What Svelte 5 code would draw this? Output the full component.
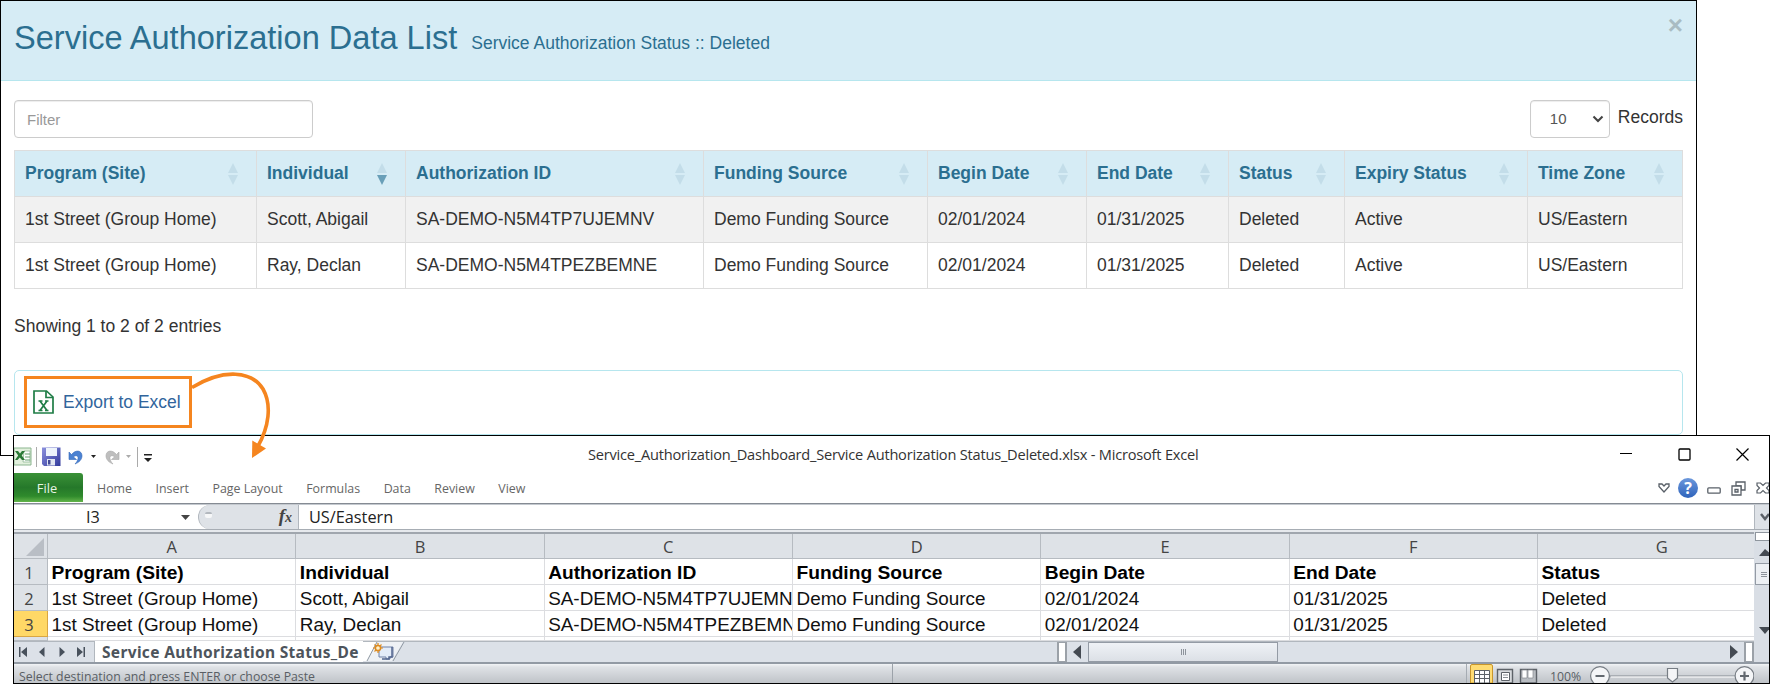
<script>
  const columns = [
    { name: "Program (Site)", width: 242 },
    { name: "Individual", width: 149, sorted: true },
    { name: "Authorization ID", width: 298 },
    { name: "Funding Source", width: 224 },
    { name: "Begin Date", width: 159 },
    { name: "End Date", width: 142 },
    { name: "Status", width: 116 },
    { name: "Expiry Status", width: 183 },
    { name: "Time Zone", width: 155 },
  ];

  const rows = [
    ["1st Street (Group Home)", "Scott, Abigail", "SA-DEMO-N5M4TP7UJEMNV", "Demo Funding Source", "02/01/2024", "01/31/2025", "Deleted", "Active", "US/Eastern"],
    ["1st Street (Group Home)", "Ray, Declan", "SA-DEMO-N5M4TPEZBEMNE", "Demo Funding Source", "02/01/2024", "01/31/2025", "Deleted", "Active", "US/Eastern"],
  ];

  const ribbonTabs = ["Home", "Insert", "Page Layout", "Formulas", "Data", "Review", "View"];
  const letters = ["A", "B", "C", "D", "E", "F", "G"];
  const sheetRows = [columns.map((c) => c.name), ...rows].map((r) => r.slice(0, 7));
  let activeRow = 3;
</script>

<div class="stage">
  <section class="panel">
    <header class="panel-header">
      <h1>Service Authorization Data List</h1>
      <span class="subtitle">Service Authorization Status :: Deleted</span>
      <button class="close" aria-label="Close">×</button>
    </header>

    <div class="panel-body">
      <div class="controls">
        <input class="filter" placeholder="Filter" />
        <div class="records">
          <div class="select">
            <span>10</span>
            <svg width="12" height="8" viewBox="0 0 12 8"><path d="M1.5 1.5 6 6l4.500-4.500" fill="none" stroke="#444" stroke-width="2.100" /></svg>
          </div>
          <span>Records</span>
        </div>
      </div>

      <table>
        <colgroup>
          {#each columns as col}
            <col style="width: {col.width}px" />
          {/each}
        </colgroup>
        <thead>
          <tr>
            {#each columns as col}
              <th>
                <div class="th">
                  <span>{col.name}</span>
                  <svg width="10" height="22" viewBox="0 0 10 22">
                    <path d="M5 0l5 10H0z" fill="#c3dde9" />
                    <path d="M0 12h10L5 22z" fill={col.sorted ? "#699fb8" : "#c3dde9"} />
                  </svg>
                </div>
              </th>
            {/each}
          </tr>
        </thead>
        <tbody>
          {#each rows as row}
            <tr>
              {#each row as cell}
                <td>{cell}</td>
              {/each}
            </tr>
          {/each}
        </tbody>
      </table>

      <p class="info">Showing 1 to 2 of 2 entries</p>

      <div class="export-bar">
        <div class="export">
          <svg width="21" height="24" viewBox="0 0 21 24">
            <g fill="none" stroke="#1f7d46" stroke-width="1.700">
              <path d="M1 1h12.500L20 7v16H1z" />
              <path d="M13 1v6.500h7" />
              <path d="M7 11l7 9.500M14 11l-7 9.500" />
              <path d="M5.500 11h4M12 11h3.500M5.500 20.500h4M12 20.500h3.500" stroke-width="1.300" />
            </g>
          </svg>
          <a href="#export">Export to Excel</a>
        </div>
      </div>
    </div>
  </section>

  <section class="excel">
    <div class="titlebar">
      <div class="quick">
        <svg width="18" height="20" viewBox="0 0 18 20">
          <path d="M0 1h17v17H0z" fill="#e2f0dd" stroke="#8bb58f" />
          <path d="M10 4h6v11h-7z" fill="#fff" stroke="#93b998" stroke-width=".8" />
          <path d="M11 7h5M11 10h5M11 13h5" stroke="#68a070" />
          <path d="M1 4h3l2 2.500L8 4h3L7.700 8.500 11 13H8L5.800 10.500 3.500 13H1l3.200-4.500z" fill="#2b7a37" />
        </svg>
        <i class="divider"></i>
        <svg class="save" width="19" height="19" viewBox="0 0 19 19">
          <defs>
            <linearGradient id="disk" x1="0" y1="0" x2="1" y2="1">
              <stop offset="0" stop-color="#8c91de" />
              <stop offset="1" stop-color="#323a9b" />
            </linearGradient>
          </defs>
          <path d="M0 .5h18.500V19H2L0 17z" fill="url(#disk)" />
          <path d="M4 1h11v8H4z" fill="#eef4fb" />
          <path d="M5 12h8v6.500H5z" fill="#e1e6f2" />
          <path d="M6 13h2.500v4.500H6z" fill="#434a94" />
        </svg>
        <svg class="undo" width="15" height="16" viewBox="0 0 15 16">
          <path d="M1 3v7.500h7.500L5.500 8c2-2.200 5-1.500 4.500 1.500-.2 2-1.400 3.800-3 5.500 4-1.500 7.200-4.500 7-8.500C13.700 1.500 8 .2 3.500 5.500z" fill="#4b82d2" stroke="#3569b8" stroke-width=".6" />
        </svg>
        <svg class="drop" width="5" height="3" viewBox="0 0 5 3"><path d="M0 0h5L2.500 3z" fill="#222" /></svg>
        <svg class="redo" width="15" height="16" viewBox="0 0 15 16">
          <path d="M14 3v7.500H6.500L9.500 8c-2-2.200-5-1.500-4.500 1.500.2 2 1.400 3.800 3 5.500-4-1.500-7.200-4.500-7-8.500C1.300 1.500 7 .2 11.500 5.500z" fill="#bebebe" stroke="#aaa" stroke-width=".6" />
        </svg>
        <svg class="drop small" width="5" height="3" viewBox="0 0 5 3"><path d="M0 0h5L2.500 3z" fill="#aaa" /></svg>
        <i class="divider"></i>
        <svg class="customize" width="8" height="9" viewBox="0 0 8 9"><path d="M0 0h8v1.400H0zM0 4h8L4 8z" fill="#222" /></svg>
      </div>
      <span class="window-title">Service_Authorization_Dashboard_Service Authorization Status_Deleted.xlsx - Microsoft Excel</span>
      <div class="window-buttons">
        <svg width="13" height="13" viewBox="0 0 13 13"><path d="M0 5.500h12" stroke="#000" /></svg>
        <svg width="13" height="13" viewBox="0 0 13 13"><rect x="1" y="1" width="11" height="11" rx="1" fill="none" stroke="#000" stroke-width="1.300" /></svg>
        <svg width="13" height="13" viewBox="0 0 13 13"><path d="M.5.5l12 12M12.500.5l-12 12" stroke="#000" stroke-width="1.200" /></svg>
      </div>
    </div>

    <div class="ribbon">
      <span class="file">File</span>
      <div class="ribbon-tabs">
        {#each ribbonTabs as tab}
          <span>{tab}</span>
        {/each}
      </div>
      <div class="ribbon-icons">
        <svg width="12" height="10" viewBox="0 0 12 10"><path d="M1 3.500V1h3l2 2 2-2h3v2.500L6 9z" fill="#fff" stroke="#596068" stroke-width="1.300" /></svg>
        <span class="help">?</span>
        <svg class="min" width="14" height="7" viewBox="0 0 14 7"><rect x=".8" y=".8" width="12.400" height="5.400" rx="1" fill="#fff" stroke="#596068" stroke-width="1.300" /></svg>
        <svg class="restore" width="15" height="15" viewBox="0 0 15 15">
          <path d="M5 1h9v8h-4V5H5z" fill="#fff" stroke="#596068" stroke-width="1.300" />
          <path d="M1 5h9v9H1z" fill="#fff" stroke="#596068" stroke-width="1.300" />
          <path d="M4 8.500h3v2.500H4z" fill="none" stroke="#596068" stroke-width="1.300" />
        </svg>
        <svg width="13" height="12" viewBox="0 0 13 12"><path d="M1 1h3.500L7 3.500 9.500 1H13v2.500L10.500 6 13 8.500V11H9.500L7 8.500 4.500 11H1V8.500L3.500 6 1 3.500z" fill="#fff" stroke="#596068" stroke-width="1.200" /></svg>
      </div>
    </div>

    <div class="formula">
      <div class="name-box">
        <span>I3</span>
        <svg width="9" height="5" viewBox="0 0 9 5"><path d="M0 0h9L4.500 5z" fill="#444" /></svg>
      </div>
      <div class="fx-area">
        <i class="knob"></i>
        <span class="fx">f<small>x</small></span>
      </div>
      <span class="formula-text">US/Eastern</span>
      <div class="expand">
        <svg width="10" height="8" viewBox="0 0 10 8"><path d="M1 1l4 5 4-5" fill="none" stroke="#5b6067" stroke-width="2.500" /></svg>
      </div>
    </div>

    <div class="sheet-area">
      <div class="main">
        <div class="grid">
          <div class="corner">
            <svg width="18" height="18" viewBox="0 0 18 18"><path d="M18 0v18H0z" fill="#b9bec5" /></svg>
          </div>
          {#each letters as letter}
            <div class="letter">{letter}</div>
          {/each}
          {#each sheetRows as row, i}
            <div class="row-number" class:active={i + 1 === activeRow}>{i + 1}</div>
            {#each row as cell}
              <div class="cell" class:bold={i === 0}>{cell}</div>
            {/each}
          {/each}
          <div class="row-number"></div>
          {#each letters as _}
            <div class="cell"></div>
          {/each}
        </div>

        <div class="sheet-tabs">
          <div class="nav">
            <svg width="10" height="10" viewBox="0 0 10 10"><path d="M1 0h1.500v10H1zM9 0v10L3 5z" /></svg>
            <svg width="10" height="10" viewBox="0 0 10 10"><path d="M7.500 0v10L2 5z" /></svg>
            <svg width="10" height="10" viewBox="0 0 10 10"><path d="M2.500 0v10L8 5z" /></svg>
            <svg width="10" height="10" viewBox="0 0 10 10"><path d="M7.500 0H9v10H7.500zM1 0v10l6-5z" /></svg>
          </div>
          <div class="tab">Service Authorization Status_De</div>
          <svg class="new-sheet" width="46" height="20" viewBox="0 0 46 20">
            <path d="M0 0h14L6 19H0z" fill="#fff" />
            <path d="M13 0L4 19h25L40 0z" fill="#eef1f5" />
            <path d="M14 0L4 19M41 0L30 19" stroke="#8f98a3" fill="none" />
            <path d="M16 5h14v10h-3v2h-4v-2h-7z" fill="#e4ecf8" stroke="#6f80a6" />
            <path d="M29 5v10h-3v2h-7" fill="none" stroke="#53668f" stroke-width="1.500" />
            <circle cx="15" cy="6" r="2.600" fill="#fff2cb" stroke="#dd8a1f" stroke-width="1.500" />
            <path d="M15 1v2M15 9v2M10 6h2M18 6h2M11.500 2.500l1.300 1.300M18.500 2.500l-1.300 1.300M11.500 9.500l1.300-1.300" stroke="#dd8a1f" stroke-width="1.200" />
          </svg>
          <div class="hscroll">
            <i class="split"></i>
            <svg width="8" height="14" viewBox="0 0 8 14"><path d="M8 0v14L0 7z" fill="#444a52" /></svg>
            <div class="thumb"><i></i><i></i><i></i></div>
            <svg class="right" width="8" height="14" viewBox="0 0 8 14"><path d="M0 0v14l8-7z" fill="#444a52" /></svg>
            <i class="split"></i>
          </div>
        </div>
      </div>

      <div class="vscroll">
        <i class="vsplit"></i>
        <svg width="11" height="7" viewBox="0 0 11 7"><path d="M0 7h14L6 0z" fill="#444a52" /></svg>
        <div class="vthumb"><i></i><i></i><i></i></div>
        <svg class="down" width="11" height="7" viewBox="0 0 11 7"><path d="M0 0h12L6 7z" fill="#444a52" /></svg>
      </div>
    </div>

    <div class="status">
      <div class="status-text">Select destination and press ENTER or choose Paste</div>
      <div class="status-right">
        <svg class="views" width="72" height="19" viewBox="0 0 72 19">
          <path d="M.5 0v19" stroke="#a5abb2" />
          <path d="M4.500 19V2q0-1.500 1.500-1.500h19q1.500 0 1.500 1.500v17z" fill="#ffdc73" stroke="#c9962b" />
          <path d="M8.500 6.500h15V19h-15zM8.500 10.500h15M8.500 14.500h15M13.500 6.500V19M18.500 6.500V19" fill="#fff" stroke="#5d6268" />
          <path d="M31.500 5.500h15V19h-15z" fill="#d7dadd" stroke="#5d6268" stroke-width="1.400" />
          <path d="M35.500 8.500h8v8h-8z" fill="#fff" stroke="#5d6268" />
          <path d="M37 11h5M37 13.500h5" stroke="#8a8f95" />
          <path d="M54.500 5.500h16V19h-16z" fill="#b9bdc2" stroke="#5d6268" stroke-width="1.400" />
          <path d="M56 6h5v8h-5zM62 6h5v8h-5z" fill="#fff" stroke="#868b91" stroke-width=".7" />
        </svg>
        <span class="percent">100%</span>
        <svg class="zoom" width="164" height="19" viewBox="0 0 164 19">
          <path d="M20 12h126" stroke="#858b93" />
          <path d="M21 13h124" stroke="#fff" />
          <g fill="#f4f5f7" stroke="#777d84" stroke-width="1.200">
            <circle cx="10" cy="12" r="9.400" />
            <circle cx="154.500" cy="12" r="9.400" />
            <path d="M77.500 4.500h10V14l-5 4-5-4z" />
          </g>
          <path d="M5.500 12h9M150 12h9M154.500 7.500v9" stroke="#62686f" stroke-width="2.200" />
        </svg>
      </div>
    </div>
  </section>

  <!-- pointer from the export link down to the opened workbook -->
  <svg class="arrow" width="90" height="96" viewBox="190 366 90 96">
    <path d="M192 387.500C224 368 252 371 263 389C272 405 269 427 257.500 447" fill="none" stroke="#f5851f" stroke-width="3.600" />
    <path d="M252 458l.3-17.500 13.700 8z" fill="#f5851f" />
  </svg>
</div>

<style>
  :global(body) {
    background: #fff;
    overflow: hidden;
  }
  .stage {
    position: relative;
    width: 1774px;
    height: 689px;
    font-family: "Liberation Sans", Arial, sans-serif;
    font-size: 17.5px;
    color: #333;
  }
  .stage * {
    box-sizing: border-box;
  }
  svg {
    display: block;
    flex: none;
  }

  .panel {
    width: 1697px;
    height: 456px;
    border: 1px solid #000;
  }
  .panel-header {
    display: flex;
    align-items: baseline;
    height: 80px;
    padding: 19px 14px 0 13px;
    background: #d6ecf5;
    border-bottom: 1px solid #b6e6ee;
    color: #2b6f90;
  }
  h1 {
    margin: 0 14px 0 0;
    font-size: 32.55px;
    font-weight: 400;
    line-height: 36px;
  }
  .close {
    align-self: flex-start;
    margin-left: auto;
    padding: 0;
    border: none;
    background: none;
    color: #a9bcc3;
    font: bold 26px/26px "Liberation Sans", Arial, sans-serif;
    margin-top: -8px;
    margin-right: -1px;
  }
  .panel-body {
    padding: 19px 13px 0;
  }
  .controls {
    display: flex;
    justify-content: space-between;
    margin-bottom: 12px;
  }
  .filter {
    width: 299px;
    height: 38px;
    padding: 0 12px;
    border: 1px solid #ccc;
    border-radius: 4px;
    box-shadow: inset 0 1px 1px rgba(0, 0, 0, 0.075);
    font: 15px "Liberation Sans", Arial, sans-serif;
  }
  .filter::placeholder {
    color: #999;
  }
  .records {
    display: flex;
    gap: 8px;
    line-height: 34px;
  }
  .select {
    display: flex;
    align-items: center;
    justify-content: space-between;
    width: 80px;
    height: 38px;
    padding: 0 5px 0 19px;
    border: 1px solid #ccc;
    border-radius: 4px;
    box-shadow: inset 0 1px 1px rgba(0, 0, 0, 0.075);
    color: #555;
    font-size: 15px;
  }

  table {
    width: 1669px;
    table-layout: fixed;
    border-collapse: collapse;
  }
  th,
  td {
    height: 46px;
    padding: 0 10px;
    border: 1px solid #ddd;
    text-align: left;
    white-space: nowrap;
  }
  th {
    background: #d6ecf5;
    color: #2b6f90;
  }
  .th {
    display: flex;
    align-items: center;
    justify-content: space-between;
    padding-right: 8px;
  }
  tbody tr:nth-child(odd) {
    background: #f1f1f1;
  }
  .info {
    margin: 27px 0 0;
    line-height: 20px;
  }
  .export-bar {
    height: 65px;
    margin-top: 34px;
    padding: 5px 9px;
    border: 1px solid #b6e6ee;
    border-radius: 5px;
  }
  .export {
    display: flex;
    align-items: center;
    gap: 9px;
    width: 168px;
    height: 52px;
    padding-left: 6px;
    border: 3px solid #f5851f;
  }
  .export a {
    color: #31659c;
    text-decoration: none;
  }

  .excel {
    position: absolute;
    left: 13px;
    top: 435px;
    display: flex;
    flex-direction: column;
    width: 1757px;
    height: 249px;
    overflow: hidden;
    background: #fff;
    border: 1px solid #000;
    font-family: "Open Sans", "Noto Sans", sans-serif;
  }
  .titlebar {
    display: grid;
    grid-template-columns: 574px 1fr 149px;
    height: 37px;
  }
  .window-title {
    color: #333;
    font-size: 14.6px;
    line-height: 37px;
    letter-spacing: -0.215px;
    white-space: nowrap;
  }
  .quick {
    display: flex;
    align-items: center;
    padding-top: 4px;
  }
  .divider {
    width: 1px;
    height: 20px;
    margin-left: 4px;
    background: #aaa;
  }
  .save {
    margin-left: 5px;
  }
  .undo {
    margin-left: 7px;
  }
  .drop {
    margin-left: 8px;
  }
  .redo {
    margin-left: 9px;
  }
  .small {
    margin-left: 6px;
  }
  .small + .divider {
    margin-left: 6px;
  }
  .customize {
    margin: 4px 0 0 6px;
  }
  .window-buttons {
    display: flex;
    gap: 45px;
    padding-top: 12px;
  }

  .ribbon {
    display: flex;
    height: 31px;
    border-bottom: 1px solid #858b93;
  }
  .file {
    width: 69px;
    height: 29px;
    border-radius: 0 3px 0 0;
    background: linear-gradient(#3a9137, #25782a 50%, #2f8a2c 80%, #62b44a);
    color: #e8f5e4;
    font-size: 12.8px;
    line-height: 31px;
    text-align: center;
    padding-right: 3px;
  }
  .ribbon-tabs {
    display: flex;
    gap: 23.5px;
    padding-left: 14px;
    color: #666;
    font-size: 12.4px;
    line-height: 31px;
    white-space: nowrap;
  }
  .ribbon-icons {
    display: flex;
    align-items: center;
    margin-left: auto;
  }
  .help {
    width: 20px;
    height: 20px;
    margin: 0 9px 0 8px;
    border-radius: 50%;
    background: linear-gradient(#6c98dc, #2e63bb);
    color: #fff;
    font-size: 16px;
    font-weight: 700;
    line-height: 20px;
    text-align: center;
  }
  .min {
    margin-top: 4px;
  }
  .restore {
    margin: 1px 10px 0;
  }

  .formula {
    display: flex;
    height: 26px;
    border-top: 1px solid #c4c9cf;
    border-bottom: 1px solid #a7adb4;
    color: #222;
    font-size: 16.3px;
    line-height: 25px;
  }
  .name-box {
    display: flex;
    align-items: center;
    justify-content: space-between;
    width: 184px;
    padding: 0 8px 0 72px;
  }
  .fx-area {
    display: flex;
    align-items: center;
    justify-content: space-between;
    width: 101px;
    padding: 0 6px 0 6px;
    border: 1px solid #b1b7be;
    border-width: 0 1px 0 1px;
    border-radius: 13px 0 0 13px;
    background: #dee2e7;
  }
  .knob {
    width: 7px;
    height: 6px;
    border-top: 2px solid #b3b8be;
    background: #f6f7f8;
    border-radius: 2px;
    margin-top: -4px;
  }
  .fx {
    color: #444;
    font: italic bold 19px/22px "Liberation Serif", serif;
  }
  .fx small {
    font-size: 14px;
  }
  .formula-text {
    padding-left: 10px;
  }
  .expand {
    display: flex;
    align-items: center;
    width: 15px;
    margin-left: auto;
    padding-left: 5px;
    border-left: 1px solid #b1b7be;
    background: #dee2e7;
  }

  .sheet-area {
    display: flex;
    height: 132px;
    padding-top: 2px;
    background: #e6e9ed;
  }
  .main {
    width: 1740px;
    height: 130px;
    border-top: 2px solid #a0a6ae;
  }
  .grid {
    display: grid;
    grid-template-columns: 34px repeat(7, 248.33px);
    grid-template-rows: 25px 26px 26px 26px 4px;
    height: 107px;
    overflow: hidden;
    background: #fff;
  }
  .corner,
  .letter,
  .row-number {
    background: #dee2e7;
    border-right: 1px solid #b6bbc1;
    border-bottom: 1px solid #b6bbc1;
    color: #444;
    font-size: 16.5px;
    text-align: center;
    line-height: 25px;
    overflow: hidden;
  }
  .corner {
    display: flex;
    justify-content: flex-end;
    padding: 4px 3px 0 0;
  }
  .row-number {
    line-height: 27px;
    padding-right: 3px;
  }
  .row-number.active {
    background: #ffd866;
    border-color: #d9a643;
  }
  .cell {
    overflow: hidden;
    padding-left: 3.5px;
    border-right: 1px solid #dcdde0;
    border-bottom: 1px solid #dcdde0;
    color: #111;
    font: 18.9px/27px "Liberation Sans", Arial, sans-serif;
    white-space: nowrap;
  }
  .cell.bold {
    color: #000;
    font-size: 19.2px;
    font-weight: 700;
  }

  .sheet-tabs {
    display: flex;
    width: 1740px;
    height: 21px;
    background: #dce1e8;
    border-top: 1px solid #b1b7be;
  }
  .nav {
    display: flex;
    align-items: center;
    justify-content: space-between;
    width: 81px;
    padding: 0 8px 0 4px;
    border-right: 1px solid #b1b7be;
    fill: #48515c;
  }
  .tab {
    width: 268px;
    padding-left: 7px;
    margin-top: -1px;
    background: #fff;
    color: #4d545c;
    font: bold 15.5px/22px "Noto Sans", sans-serif;
    letter-spacing: 0.33px;
    white-space: nowrap;
  }
  .hscroll {
    display: flex;
    align-items: center;
    width: 697px;
    margin-left: auto;
  }
  .split {
    width: 10px;
    height: 20px;
    border: 2px solid #9ba1a8;
    border-width: 1px 2px;
    background: #fff;
    margin-right: 6px;
  }
  .thumb {
    display: flex;
    align-items: center;
    justify-content: center;
    gap: 1px;
    width: 190px;
    height: 20px;
    margin-left: 7px;
    border: 1px solid #949ba5;
    background: linear-gradient(#eff2f6, #dce0e6);
  }
  .thumb i {
    width: 1px;
    height: 6px;
    background: #8d939b;
  }
  .right {
    margin: 0 6px 0 auto;
  }
  .right + .split {
    margin-right: 0;
  }

  .vscroll {
    display: flex;
    flex-direction: column;
    width: 15px;
    height: 130px;
    padding-left: 1px;
    background: #d9dee5;
  }
  .vscroll svg {
    margin: 8px 0 0 4px;
  }
  .vsplit {
    height: 9px;
    border: 1px solid #8f969e;
    border-right: none;
    background: #fff;
  }
  .vthumb {
    display: flex;
    flex-direction: column;
    align-items: center;
    justify-content: center;
    gap: 1px;
    height: 22px;
    margin-top: 7px;
    padding-left: 3px;
    border: 1px solid #949ba5;
    border-right: none;
    background: #edf0f4;
  }
  .vthumb i {
    width: 6px;
    height: 1px;
    background: #8d939b;
  }
  .vscroll .down {
    margin-top: 42px;
  }

  .status {
    display: flex;
    justify-content: space-between;
    height: 21px;
    padding-right: 15px;
    border-top: 2px solid #929aa4;
    background: linear-gradient(#f2f4f6, #dfe2e6 3px, #bfc3c8);
    color: #595e64;
    font-size: 12.3px;
    line-height: 26px;
    white-space: nowrap;
  }
  .status-text {
    width: 879px;
    padding-left: 5px;
    border-right: 1px solid #9ca2a9;
  }
  .status-right {
    display: flex;
  }
  .percent {
    width: 52px;
    padding-left: 12px;
  }

  .arrow {
    position: absolute;
    left: 190px;
    top: 366px;
  }
</style>
